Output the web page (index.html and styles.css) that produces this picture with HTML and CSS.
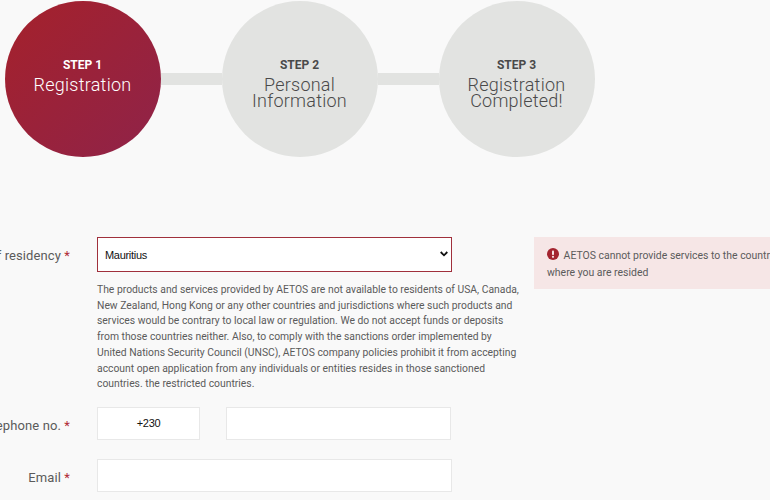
FILE: index.html
```html
<!DOCTYPE html>
<html lang="en">
<head>
    <meta charset="UTF-8">
    <meta name="viewport" content="width=device-width, initial-scale=1.0">
    <title>Registration</title>
    <link rel="stylesheet" href="styles.css">
</head>
<body>

    <div class="steps">
        <div class="step active">
            <div class="step-no">STEP 1</div>
            <div class="step-name">Registration</div>
        </div>
        <div class="step-line"></div>
        <div class="step">
            <div class="step-no">STEP 2</div>
            <div class="step-name">Personal<br>Information</div>
        </div>
        <div class="step-line"></div>
        <div class="step">
            <div class="step-no">STEP 3</div>
            <div class="step-name">Registration<br>Completed!</div>
        </div>
    </div>

    <form class="form">
        <div class="row row-country">
            <label class="label">Country of residency <span class="req">*</span></label>
            <div class="field">
                <div class="select-wrap">
                    <select class="select">
                        <option>Mauritius</option>
                    </select>
                    <svg class="select-arrow" viewBox="0 0 8 6" width="8" height="6">
                        <path d="M0.7 1 L4 4.3 L7.3 1" fill="none" stroke="#111" stroke-width="1.8"/>
                    </svg>
                </div>
                <p class="note">The products and services provided by AETOS are not available to residents of USA, Canada,<br>
                New Zealand, Hong Kong or any other countries and jurisdictions where such products and<br>
                services would be contrary to local law or regulation. We do not accept funds or deposits<br>
                from those countries neither. Also, to comply with the sanctions order implemented by<br>
                United Nations Security Council (UNSC), AETOS company policies prohibit it from accepting<br>
                account open application from any individuals or entities resides in those sanctioned<br>
                countries. the restricted countries.</p>
            </div>
            <div class="alert">
                <svg class="alert-icon" viewBox="0 0 12 12" width="12" height="12">
                    <circle cx="6" cy="6" r="6" fill="#a3242f"/>
                    <rect x="5" y="2.4" width="2" height="4.6" rx="0.8" fill="#f6e6e6"/>
                    <circle cx="6" cy="8.8" r="1.1" fill="#f6e6e6"/>
                </svg>
                AETOS cannot provide services to the country<br>where you are resided
            </div>
        </div>

        <div class="row row-phone">
            <label class="label">Telephone no. <span class="req">*</span></label>
            <div class="phone">
                <input type="text" class="input code" value="+230">
                <input type="text" class="input number">
            </div>
        </div>

        <div class="row row-email">
            <label class="label">Email <span class="req">*</span></label>
            <input type="text" class="input email">
        </div>
    </form>

</body>
</html>
```

FILE: styles.css
```css
* {
    margin: 0;
    padding: 0;
    box-sizing: border-box;
}

html, body {
    height: 100%;
    overflow: hidden;
}

body {
    font-family: 'Roboto', 'Liberation Sans', sans-serif;
    background-color: #f9f9f9;
    color: #555;
}

.steps {
    display: flex;
    align-items: center;
    padding: 1px 0 0 4.5px;
}

.step {
    width: 156px;
    height: 156px;
    flex-shrink: 0;
    border-radius: 50%;
    background-color: #e2e3e1;
    color: #4a4a4a;
    text-align: center;
    padding-top: 56px;
}

.step.active {
    background: linear-gradient(135deg, #a5212b, #8f2349);
    color: #fff;
}

.step-no {
    font-size: 12px;
    font-weight: 700;
    line-height: 16px;
}

.step-name {
    font-size: 18px;
    font-weight: 300;
    line-height: 16px;
    letter-spacing: 0.25px;
    margin-top: 4px;
}

.step-line {
    width: 61px;
    height: 12px;
    background-color: #e2e3e1;
}

.form {
    margin-top: 80px;
}

.row {
    display: grid;
    grid-template-columns: 70px 355px 437px;
    column-gap: 27px;
}

.label {
    display: flex;
    justify-content: flex-end;
    white-space: pre;
    padding-top: 1px;
    font-size: 13px;
    letter-spacing: 0.1px;
    line-height: 36px;
    color: #5b5b5b;
}

.req {
    color: #b02a35;
}

.select-wrap {
    position: relative;
}

.select {
    display: block;
    width: 355px;
    height: 35px;
    padding-left: 7px;
    appearance: none;
    border: 1px solid #a0303c;
    border-radius: 0;
    background-color: #fff;
    color: #111;
    font-family: 'Liberation Sans', sans-serif;
    font-size: 11px;
    letter-spacing: -0.3px;
}

.select-arrow {
    position: absolute;
    right: 4px;
    top: 14px;
}

.note {
    margin-top: 10px;
    white-space: nowrap;
    font-size: 10.35px;
    line-height: 15.7px;
    color: #5b5b5b;
}

.alert {
    margin-left: 55px;
    width: 300px;
    height: 52px;
    padding: 10px 0 0 13px;
    background-color: #f6e6e6;
    font-size: 10.45px;
    line-height: 17px;
    color: #5b5b5b;
    white-space: nowrap;
}

.alert-icon {
    vertical-align: -1px;
    margin-right: 2px;
}

.row-phone {
    margin-top: 15px;
}

.row-email {
    margin-top: 15px;
}

.phone {
    display: flex;
    gap: 26px;
}

.input {
    height: 33px;
    border: 1px solid #e8e8e8;
    background-color: #fff;
    font-family: 'Liberation Sans', sans-serif;
    font-size: 11px;
    letter-spacing: -0.3px;
    color: #111;
}

.code {
    width: 103px;
    text-align: center;
}

.number {
    width: 225px;
}

.email {
    width: 355px;
}
```
